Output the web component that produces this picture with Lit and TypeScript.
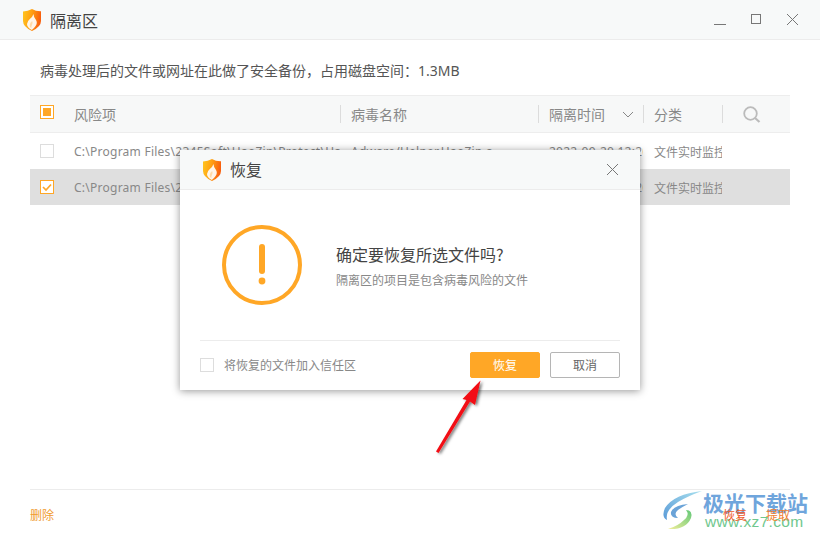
import { LitElement, html, css, svg } from "lit";
import { customElement } from "lit/decorators.js";

const shield = (id: string) => html`<svg class="shield" width="18" height="22" viewBox="0 0 18 22">
  <defs><linearGradient id=${id} x1="0" y1="0" x2="1" y2="0.2">
    <stop offset="0" stop-color="#ffc61f"/><stop offset="0.5" stop-color="#ffa012"/><stop offset="1" stop-color="#f8600e"/>
  </linearGradient></defs>
  <path d="M0 2.6 Q5 2.4 9 0 Q13 2.4 18 2.2 V12 Q18 17.8 9 22 Q0 17.8 0 12 Z" fill="url(#${id})"/>
  <path d="M10.5 5 Q10.6 8.4 13 11 Q14.8 14 12.6 17 Q10.8 19.6 8.8 21 Q4 18.6 4 15 Q4.2 12.2 6.6 10.2 Q9.6 8 10.5 5 Z" fill="#fff" opacity=".9"/>
  <path d="M9.2 12 Q10.2 14.2 8.9 16.2 Q8 17.6 8.4 19 Q6.2 17.6 6.8 15.4 Q7.3 13.4 9.2 12 Z" fill="#ffd9a8"/>
</svg>`;

const close = svg`<path d="M1 1 L12 12 M12 1 L1 12" stroke="#777" stroke-width="1" fill="none"/>`;

@customElement("app-root")
export class AppRoot extends LitElement {
  static styles = css`
    :host {
      display: flex; flex-direction: column; position: relative; overflow: hidden;
      width: 820px; height: 540px; background: #fff; color: #555;
      font-family: "Noto Sans CJK SC", "Noto Sans", sans-serif; font-size: 12px;
    }
    .titlebar {
      flex: none; display: flex; align-items: center; box-sizing: border-box; height: 40px;
      padding-left: 23px; background: #f7f9f9; border-bottom: 1px solid #ececec;
    }
    .titlebar .title { margin-left: 9px; font-size: 16px; color: #444; line-height: 20px; }
    .controls { margin-left: auto; display: flex; align-items: flex-start; height: 13px; padding-right: 21px; gap: 24px; }
    .controls svg { display: block; }
    .notice { flex: none; margin: 18px 0 0 40px; height: 24px; line-height: 24px; font-size: 14px; color: #555; }
    .notice .size { font-family: "Noto Sans", sans-serif; }
    .table { flex: none; margin: 13px 30px 0; }
    .row { display: grid; grid-template-columns: 44px 266px 198px 105px 79px 68px; align-items: center; }
    .head { box-sizing: border-box; height: 38px; background: #f7f8f8; border-top: 1px solid #ededed; border-bottom: 1px solid #ededed; font-size: 14px; color: #888; }
    .head .cell { height: 18px; line-height: 18px; padding-left: 10px; border-left: 1px solid #dcdcdc; }
    .head .cell.first { border-left: none; padding-left: 0; }
    .head .sort { display: flex; align-items: center; }
    .head .sort svg { margin-left: 17px; }
    .head .search { display: flex; align-items: center; padding-left: 20px; }
    .body-row { height: 36px; color: #888; line-height: 35px; }
    .body-row.sel { background: #dfdfdf; }
    .clip { overflow: hidden; white-space: nowrap; padding-left: 11px; font-size: 12px; }
    .clip.first { padding-left: 0; }
    .path { font-family: "Noto Sans", sans-serif; letter-spacing: .25px; }
    .box { display: flex; align-items: center; justify-content: center; box-sizing: border-box; width: 14px; height: 14px; margin-left: 10px; border: 1px solid #ddd; background: #fff; }
    .box.on { border-color: #ffa726; }
    .box .mark { width: 8px; height: 8px; background: #ffa726; }
    .footer { margin: auto 30px 0; height: 51px; box-sizing: border-box; border-top: 1px solid #ececec; display: flex; align-items: center; padding-bottom: 2px; color: #f09a2e; }
    .footer .right { position: relative; z-index: 1; margin-left: auto; display: flex; gap: 19px; color: #f0822e; }
    .footer .right .red { color: #ef5a2a; }
    .dialog {
      position: absolute; left: 180px; top: 150px; width: 460px; height: 240px; display: flex; flex-direction: column;
      background: #fff; box-shadow: 0 1px 8px rgba(0,0,0,.42);
    }
    .dhead { flex: none; box-sizing: border-box; height: 40px; display: flex; align-items: center; padding: 0 21px 0 23px; background: #f7f9f9; border-bottom: 1px solid #ececec; }
    .dhead .title { margin-left: 9px; font-size: 16px; line-height: 20px; color: #444; margin-bottom: 2px; }
    .dhead svg.x { margin-left: auto; }
    .dmain { flex: none; height: 150px; display: flex; align-items: center; padding-left: 42px; box-sizing: border-box; }
    .dtext { margin-left: 34px; margin-top: 1px; }
    .dtitle { font-size: 16px; line-height: 24px; color: #444; }
    .dsub { font-size: 12px; line-height: 18px; margin-top: 5px; color: #888; }
    .dfoot { margin: 0 20px; flex: 1; border-top: 1px solid #ececec; display: flex; align-items: center; padding-bottom: 1px; }
    .dfoot .box { margin-left: 0; }
    .dfoot .lab { margin-left: 10px; margin-bottom: 2px; color: #888; }
    .btn { box-sizing: border-box; width: 70px; height: 26px; line-height: 23px; text-align: center; border-radius: 2px; color: #666; border: 1px solid #b5b5b5; margin-left: 10px; }
    .btn.primary { margin-left: auto; background: #ffa726; border-color: #ffa726; color: #fff; }
    .arrow { position: absolute; left: 420px; top: 370px; pointer-events: none; }
    .wm { position: absolute; left: 660px; top: 488px; width: 155px; height: 46px; pointer-events: none; }
    .wm svg { position: absolute; left: 0; top: 0; }
    .wm .cn { position: absolute; left: 43px; top: 0; font-size: 21px; line-height: 28px; font-weight: 700; color: #6fa5dc; white-space: nowrap; }
    .wm .en { position: absolute; left: 45px; top: 25px; font-family: "Liberation Sans", sans-serif; font-size: 15.5px; line-height: 18px; color: #6fc78e; letter-spacing: .35px; white-space: nowrap; }
  `;

  private rowTpl(sel: boolean, path: string) {
    return html`<div class="row body-row ${sel ? "sel" : ""}">
      <div class="clip first">${sel
        ? html`<div class="box on"><svg width="10" height="10" viewBox="0 0 10 10"><path d="M1 5 L4 8 L9 2.5" stroke="#ffa726" stroke-width="1.7" fill="none"/></svg></div>`
        : html`<div class="box"></div>`}</div>
      <div class="clip path first">${path}</div>
      <div class="clip path">Adware/Helper.HaoZip.a</div>
      <div class="clip path">2022-09-20 12:20:12</div>
      <div class="clip">文件实时监控</div>
      <div></div>
    </div>`;
  }

  render() {
    return html`
      <div class="titlebar">
        ${shield("g1")}
        <span class="title">隔离区</span>
        <div class="controls">
          <svg width="12" height="12" viewBox="0 0 12 12"><path d="M0 11.5 H12" stroke="#777"/></svg>
          <svg width="12" height="12" viewBox="0 0 12 12"><rect x="1.5" y="1.5" width="9" height="9" stroke="#777" fill="none"/></svg>
          <svg width="13" height="13" viewBox="0 0 13 13">${close}</svg>
        </div>
      </div>
      <div class="notice">病毒处理后的文件或网址在此做了安全备份${"\uFF0C"}占用磁盘空间${"\uFF1A"}<span class="size">1.3MB</span></div>
      <div class="table">
        <div class="row head">
          <div class="cell first"><div class="box on"><div class="mark"></div></div></div>
          <div class="cell first">风险项</div>
          <div class="cell">病毒名称</div>
          <div class="cell sort">隔离时间<svg width="12" height="7" viewBox="0 0 12 7"><path d="M1 1 L6 6 L11 1" stroke="#888" fill="none"/></svg></div>
          <div class="cell">分类</div>
          <div class="cell search"><svg width="18" height="17" viewBox="0 0 18 17"><circle cx="7.5" cy="7.5" r="6.3" stroke="#bbb" stroke-width="1.8" fill="none"/><path d="M12 12 L16.5 16" stroke="#bbb" stroke-width="2.2"/></svg></div>
        </div>
        ${this.rowTpl(false, "C:\\Program Files\\2345Soft\\HaoZip\\Protect\\HaoZipHelper")}
        ${this.rowTpl(true, "C:\\Program Files\\2345Soft\\HaoZip\\Protect\\HaoZipHelper")}
      </div>
      <div class="footer">
        <span>删除</span>
        <div class="right"><span class="red">恢复</span><span>提取</span></div>
      </div>

      <div class="dialog">
        <div class="dhead">
          ${shield("g2")}
          <span class="title">恢复</span>
          <svg class="x" width="13" height="13" viewBox="0 0 13 13">${close}</svg>
        </div>
        <div class="dmain">
          <svg width="80" height="80" viewBox="0 0 80 80">
            <circle cx="40" cy="40" r="38" fill="none" stroke="#ffa726" stroke-width="4"/>
            <rect x="37" y="19" width="6" height="30" rx="3" fill="#ffa726"/>
            <circle cx="40" cy="56" r="3.4" fill="#ffa726"/>
          </svg>
          <div class="dtext">
            <div class="dtitle">确定要恢复所选文件吗?</div>
            <div class="dsub">隔离区的项目是包含病毒风险的文件</div>
          </div>
        </div>
        <div class="dfoot">
          <div class="box"></div>
          <span class="lab">将恢复的文件加入信任区</span>
          <div class="btn primary">恢复</div>
          <div class="btn">取消</div>
        </div>
      </div>

      <svg class="arrow" width="80" height="100" viewBox="0 0 80 100">
        <defs><filter id="sh" x="-40%" y="-40%" width="180%" height="180%"><feDropShadow dx="2" dy="1" stdDeviation="1.6" flood-color="#000" flood-opacity=".55"/></filter></defs>
        <path d="M60.5 10.5 L55 35 L50 31.5 L18.5 83 L16 81.5 L46.5 30 L42.5 29 Z" fill="#f20d12" filter="url(#sh)"/>
      </svg>

      <div class="wm">
        <svg width="46" height="46" viewBox="0 0 46 46">
          <defs>
            <linearGradient id="wb" x1="0" y1="1" x2="1" y2="0"><stop offset="0" stop-color="#5b9bd8"/><stop offset="1" stop-color="#a8e0ee"/></linearGradient>
            <linearGradient id="wg" x1="0" y1="1" x2="1" y2="0"><stop offset="0" stop-color="#f2ee9a"/><stop offset="1" stop-color="#62c878"/></linearGradient>
          </defs>
          <path d="M42 3 Q14 6 5 20 Q1 29 7 32 Q5 22 18 14 Q28 8 42 3 Z" fill="url(#wb)"/>
          <path d="M28 16 Q14 17 11 24 Q10 30 18 30 Q13 26 18 22 Q22 19 28 16 Z" fill="#6aa3d8"/>
          <path d="M8 41 Q26 42 31 30 Q33 22 26 22 Q30 27 24 32 Q18 38 8 41 Z" fill="url(#wg)"/>
        </svg>
        <div class="cn">极光下载站</div>
        <div class="en">www.xz7.com</div>
      </div>
    `;
  }
}
